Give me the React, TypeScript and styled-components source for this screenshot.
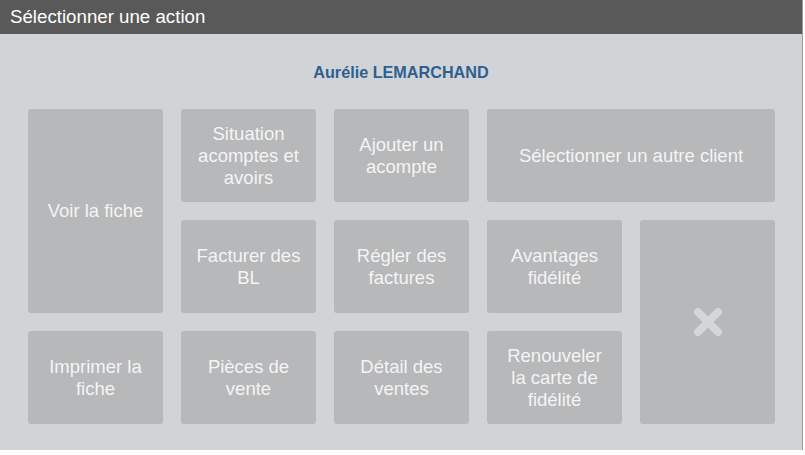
import styled, { createGlobalStyle } from "styled-components";

const GlobalStyle = createGlobalStyle`
  body {
    margin: 0;
    background: #ffffff;
    font-family: "Liberation Sans", Arial, sans-serif;
  }
`;

const Dialog = styled.div`
  width: 802px;
  height: 450px;
  background: #d1d4d7;
  border-right: 1px solid #9a9c9e;
  display: flex;
  flex-direction: column;
`;

const Header = styled.div`
  height: 34px;
  background: #5a5959;
  color: #ffffff;
  font-size: 18.7px;
  line-height: 34px;
  padding-left: 10px;
`;

const ClientName = styled.div`
  color: #2f5f91;
  font-weight: bold;
  font-size: 16.2px;
  line-height: 18px;
  text-align: center;
  padding: 29px 0 28px;
`;

const Grid = styled.div`
  display: grid;
  grid-template-columns: repeat(5, 135px);
  grid-template-rows: repeat(3, 93px);
  gap: 18px;
  padding-left: 28px;
`;

const ActionButton = styled.div<{ $col: string; $row: string }>`
  grid-column: ${(p) => p.$col};
  grid-row: ${(p) => p.$row};
  background: #b7b8b9;
  border-radius: 3px;
  color: #f4f4f4;
  font-size: 18.5px;
  line-height: 22px;
  text-align: center;
  display: flex;
  align-items: center;
  justify-content: center;
  padding: 0 12px;
`;

const CloseIcon = () => (
  <svg width="34" height="34" viewBox="0 0 34 34">
    <path
      d="M7 7 L27 27 M27 7 L7 27"
      stroke="#d5d6d7"
      strokeWidth="8"
      strokeLinecap="round"
    />
  </svg>
);

const actions = [
  { label: "Voir la fiche", col: "1", row: "1 / 3" },
  { label: "Situation acomptes et avoirs", col: "2", row: "1" },
  { label: "Ajouter un acompte", col: "3", row: "1" },
  { label: "Sélectionner un autre client", col: "4 / 6", row: "1" },
  { label: "Facturer des BL", col: "2", row: "2" },
  { label: "Régler des factures", col: "3", row: "2" },
  { label: "Avantages fidélité", col: "4", row: "2" },
  { label: "Imprimer la fiche", col: "1", row: "3" },
  { label: "Pièces de vente", col: "2", row: "3" },
  { label: "Détail des ventes", col: "3", row: "3" },
  { label: "Renouveler la carte de fidélité", col: "4", row: "3" },
];

const App = () => {
  return (
    <>
      <GlobalStyle />
      <Dialog>
        <Header>Sélectionner une action</Header>
        <ClientName>Aurélie LEMARCHAND</ClientName>
        <Grid>
          {actions.map((a) => (
            <ActionButton key={a.label} $col={a.col} $row={a.row}>
              {a.label}
            </ActionButton>
          ))}
          <ActionButton $col="5" $row="2 / 4">
            <CloseIcon />
          </ActionButton>
        </Grid>
      </Dialog>
    </>
  );
};

export default App;
